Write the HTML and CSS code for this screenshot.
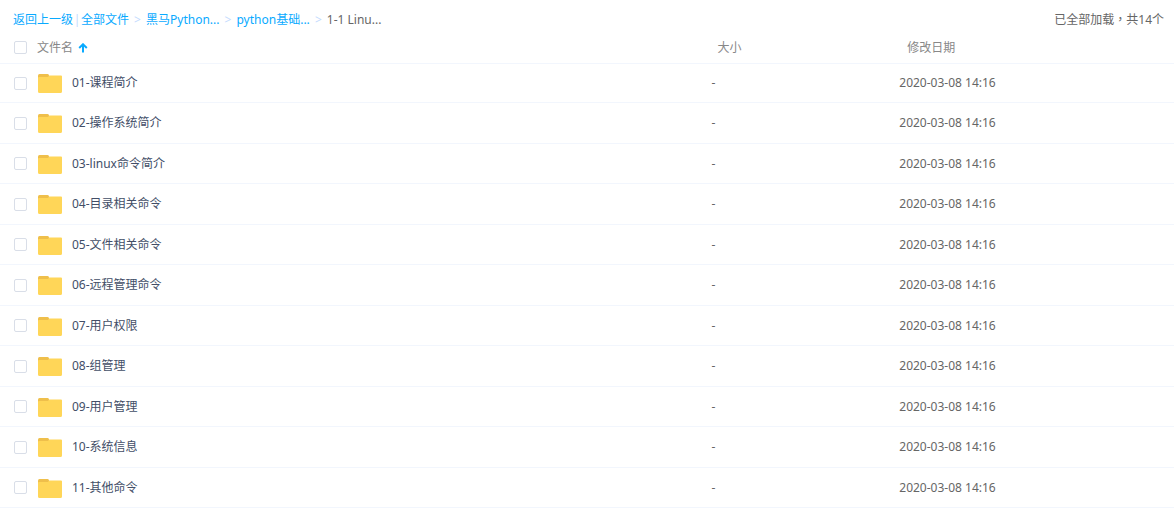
FILE: index.html
```html
<!DOCTYPE html>
<html lang="zh-CN">
<head>
<meta charset="utf-8">
<title>全部文件</title>
<link rel="stylesheet" href="styles.css">
</head>
<body>
<svg class="sprite" aria-hidden="true">
  <symbol id="folder" viewBox="0 -1 24 20">
    <path d="M0 1.5Q0 0 1.5 0H9.5Q10.5 0 11 1.2V5H0Z" fill="#efbf4b"/>
    <path d="M0 4Q0 3 1 3H10L11.2 1.5H23Q24 1.5 24 2.5V17.500Q24 19 22.500 19H1.500Q0 19 0 17.500Z" fill="#ffd658"/>
  </symbol>
</svg>
<header class="topbar">
  <nav class="crumbs" aria-label="路径">
    <a href="#">返回上一级</a><span class="bar">|</span><a href="#">全部文件</a><span class="sep">&gt;</span><a href="#">黑马Python...</a><span class="sep">&gt;</span><a href="#">python基础...</a><span class="sep">&gt;</span><span>1-1 Linu...</span>
  </nav>
  <span class="loaded">已全部加载<span class="comma" lang="zh-TW">，</span>共14个</span>
</header>
<table class="files">
  <thead>
    <tr>
      <th class="name"><div class="entry"><input type="checkbox" class="check" aria-label="全选"><button type="button" class="sort">文件名<svg class="arrow" viewBox="0 0 10 10" aria-hidden="true"><path d="M5 9.500V2M1.200 5L5 1.300L8.800 5" fill="none" stroke="#09aaff" stroke-width="2"/></svg></button></div></th>
      <th class="size">大小</th>
      <th class="date">修改日期</th>
    </tr>
  </thead>
  <tbody>
    <tr><td><div class="entry"><input type="checkbox" class="check" aria-label="01-课程简介"><svg class="folder" aria-hidden="true"><use href="#folder"/></svg><a href="#">01-课程简介</a></div></td><td>-</td><td>2020-03-08 14:16</td></tr>
    <tr><td><div class="entry"><input type="checkbox" class="check" aria-label="02-操作系统简介"><svg class="folder" aria-hidden="true"><use href="#folder"/></svg><a href="#">02-操作系统简介</a></div></td><td>-</td><td>2020-03-08 14:16</td></tr>
    <tr><td><div class="entry"><input type="checkbox" class="check" aria-label="03-linux命令简介"><svg class="folder" aria-hidden="true"><use href="#folder"/></svg><a href="#">03-linux命令简介</a></div></td><td>-</td><td>2020-03-08 14:16</td></tr>
    <tr><td><div class="entry"><input type="checkbox" class="check" aria-label="04-目录相关命令"><svg class="folder" aria-hidden="true"><use href="#folder"/></svg><a href="#">04-目录相关命令</a></div></td><td>-</td><td>2020-03-08 14:16</td></tr>
    <tr><td><div class="entry"><input type="checkbox" class="check" aria-label="05-文件相关命令"><svg class="folder" aria-hidden="true"><use href="#folder"/></svg><a href="#">05-文件相关命令</a></div></td><td>-</td><td>2020-03-08 14:16</td></tr>
    <tr><td><div class="entry"><input type="checkbox" class="check" aria-label="06-远程管理命令"><svg class="folder" aria-hidden="true"><use href="#folder"/></svg><a href="#">06-远程管理命令</a></div></td><td>-</td><td>2020-03-08 14:16</td></tr>
    <tr><td><div class="entry"><input type="checkbox" class="check" aria-label="07-用户权限"><svg class="folder" aria-hidden="true"><use href="#folder"/></svg><a href="#">07-用户权限</a></div></td><td>-</td><td>2020-03-08 14:16</td></tr>
    <tr><td><div class="entry"><input type="checkbox" class="check" aria-label="08-组管理"><svg class="folder" aria-hidden="true"><use href="#folder"/></svg><a href="#">08-组管理</a></div></td><td>-</td><td>2020-03-08 14:16</td></tr>
    <tr><td><div class="entry"><input type="checkbox" class="check" aria-label="09-用户管理"><svg class="folder" aria-hidden="true"><use href="#folder"/></svg><a href="#">09-用户管理</a></div></td><td>-</td><td>2020-03-08 14:16</td></tr>
    <tr><td><div class="entry"><input type="checkbox" class="check" aria-label="10-系统信息"><svg class="folder" aria-hidden="true"><use href="#folder"/></svg><a href="#">10-系统信息</a></div></td><td>-</td><td>2020-03-08 14:16</td></tr>
    <tr><td><div class="entry"><input type="checkbox" class="check" aria-label="11-其他命令"><svg class="folder" aria-hidden="true"><use href="#folder"/></svg><a href="#">11-其他命令</a></div></td><td>-</td><td>2020-03-08 14:16</td></tr>
  </tbody>
</table>
</body>
</html>
```
FILE: styles.css
```css
* { box-sizing: border-box; }
body {
  margin: 0;
  background: #fff;
  color: #666;
  font: 12px/18px "Noto Sans", "Noto Sans CJK SC", sans-serif;
}
a { color: #09aaff; text-decoration: none; }
.sprite { display: none; }
.topbar {
  display: flex;
  justify-content: space-between;
  padding: 11px 10px 3px 13px;
}
.crumbs { display: flex; white-space: nowrap; }
.bar { width: 8px; text-align: center; color: #c4dbfe; }
.sep { width: 17px; text-align: center; color: #c4dbfe; }
.comma { font-family: "Noto Sans CJK TC", sans-serif; line-height: 1; }
.files {
  width: 100%;
  border-collapse: separate;
  border-spacing: 0;
  table-layout: fixed;
}
th, td {
  padding: 0;
  text-align: left;
  vertical-align: middle;
  border-bottom: 1px solid #f2f6fd;
}
th { height: 32px; font-weight: 400; color: #888; }
td { height: 40px; }
tbody tr:first-child td { height: 39px; }
tbody tr:nth-child(even) td { height: 41px; }
.name { width: 60.6%; }
.size { width: 16%; padding-left: 6px; }
.date { padding-left: 8px; }
.entry { display: flex; align-items: center; padding-left: 14px; }
.check {
  appearance: none;
  width: 13px;
  height: 13px;
  margin: 0 10px 0 0;
  border: 1px solid #d9dee8;
  border-radius: 2px;
  background: #fff;
}
.folder { width: 24px; height: 20px; margin: 0 10px 0 1px; }
td a { color: #424e67; }
.sort {
  display: flex;
  align-items: center;
  gap: 5px;
  padding: 0;
  border: 0;
  background: none;
  color: #888;
  font: inherit;
}
.arrow { width: 10px; height: 10px; }
```
